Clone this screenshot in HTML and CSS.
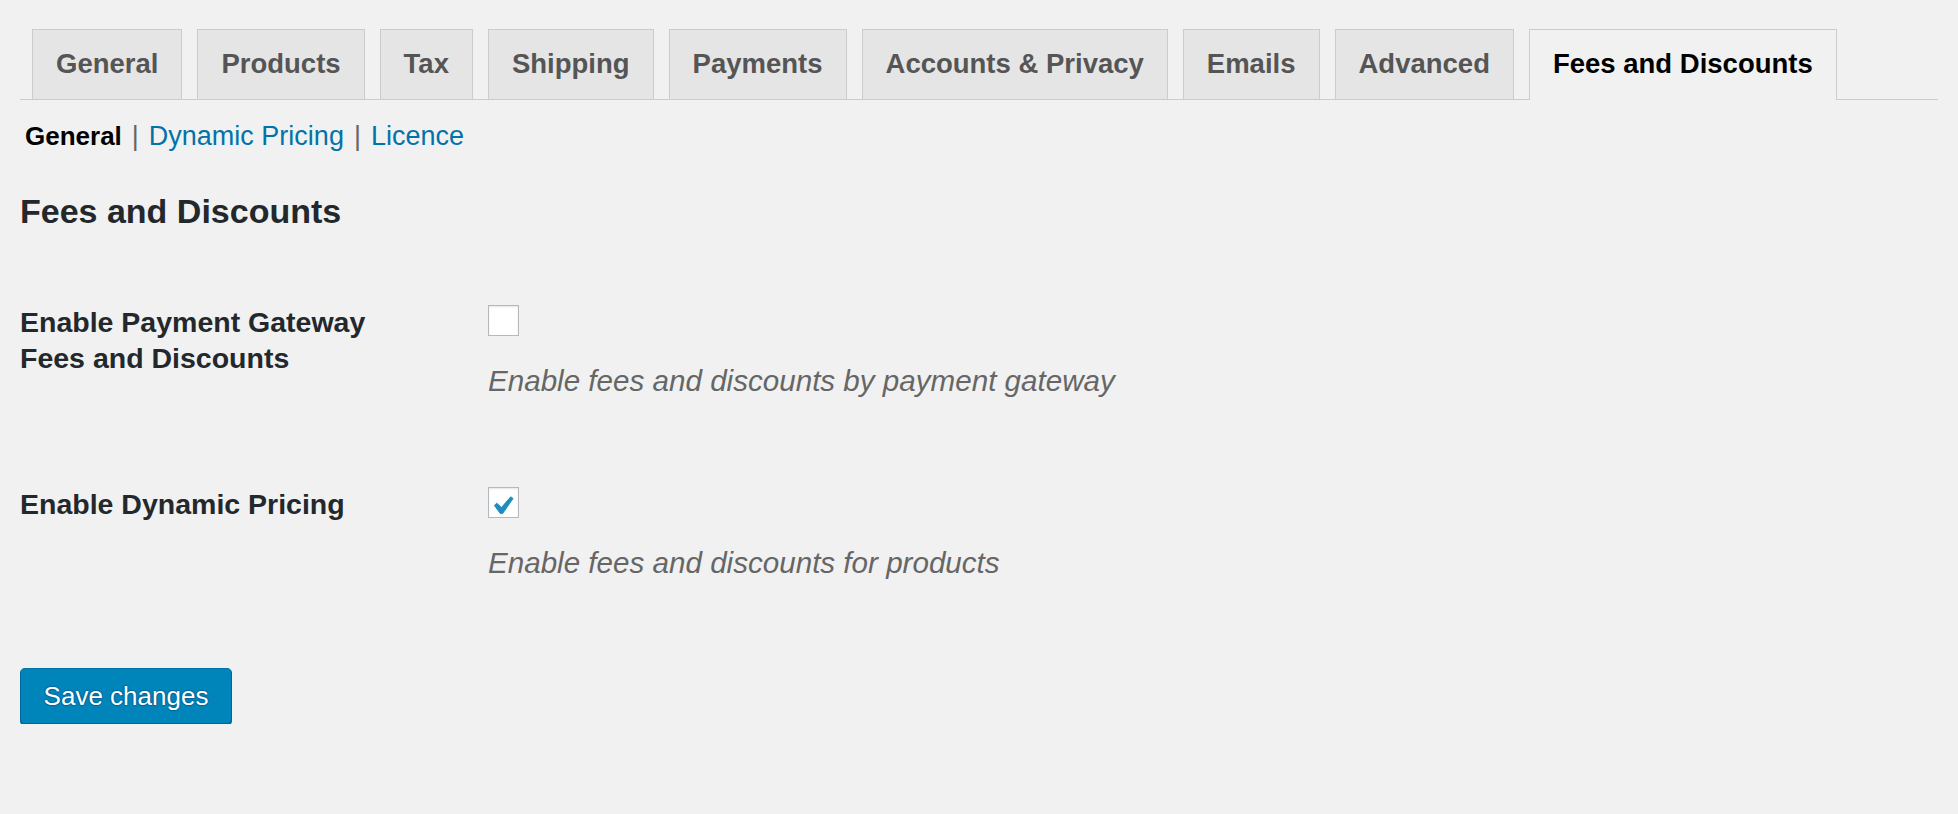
FILE: index.html
```html
<!DOCTYPE html>
<html lang="en">
<head>
    <meta charset="UTF-8">
    <meta name="viewport" content="width=device-width, initial-scale=1.0">
    <title>Fees and Discounts</title>
    <link rel="stylesheet" href="styles.css">
</head>
<body>
<div class="wrap">
    <nav class="nav-tab-wrapper">
        <a class="nav-tab" href="#">General</a>
        <a class="nav-tab" href="#">Products</a>
        <a class="nav-tab" href="#">Tax</a>
        <a class="nav-tab" href="#">Shipping</a>
        <a class="nav-tab" href="#">Payments</a>
        <a class="nav-tab" href="#">Accounts &amp; Privacy</a>
        <a class="nav-tab" href="#">Emails</a>
        <a class="nav-tab" href="#">Advanced</a>
        <a class="nav-tab nav-tab-active" href="#">Fees and Discounts</a>
    </nav>

    <ul class="subsubsub">
        <li><a class="current" href="#">General</a><span class="sep">|</span></li>
        <li><a href="#">Dynamic Pricing</a><span class="sep">|</span></li>
        <li><a href="#">Licence</a></li>
    </ul>

    <h2 class="section-title">Fees and Discounts</h2>

    <form class="form-table">
        <div class="form-row">
            <label class="form-label">Enable Payment Gateway Fees and Discounts</label>
            <div class="form-field">
                <span class="checkbox"></span>
                <p class="description">Enable fees and discounts by payment gateway</p>
            </div>
        </div>
        <div class="form-row">
            <label class="form-label">Enable Dynamic Pricing</label>
            <div class="form-field">
                <span class="checkbox is-checked">
                    <svg viewBox="0 0 20 20" width="36" height="36"><path d="M14.83 4.89l1.34.94-5.81 8.38H9.02L5.78 9.67l1.34-1.25 2.57 2.4z"/></svg>
                </span>
                <p class="description">Enable fees and discounts for products</p>
            </div>
        </div>

        <button type="button" class="button-primary">Save changes</button>
    </form>
</div>
</body>
</html>
```

FILE: styles.css
```css
body {
    margin: 0;
    padding: 0;
    background-color: #f1f1f1;
    color: #23282d;
    font-family: "Liberation Sans", Arial, sans-serif;
}
a {
    text-decoration: none;
}
.wrap {
    padding: 0 20px;
}
.nav-tab-wrapper {
    display: flex;
    gap: 15px;
    padding: 29px 0 0 12px;
    border-bottom: 1px solid #ccc;
}
.nav-tab {
    display: block;
    height: 69px;
    padding: 0 23px;
    border: 1px solid #ccc;
    border-bottom: none;
    background: #e5e5e5;
    color: #555;
    font-size: 27.5px;
    font-weight: bold;
    line-height: 68px;
    white-space: nowrap;
}
.nav-tab-active {
    background: #f1f1f1;
    color: #000;
    height: 70px;
    margin-bottom: -1px;
}
.subsubsub {
    list-style: none;
    display: flex;
    margin: 18px 0 0;
    padding: 0 0 0 5px;
    font-size: 27px;
    line-height: 36px;
    color: #666;
}
.subsubsub a {
    color: #0073aa;
}
.subsubsub a.current {
    color: #000;
    font-weight: bold;
    font-size: 26px;
}
.sep {
    padding: 0 10px;
}
.section-title {
    margin: 37px 0 33px;
    font-size: 34px;
    line-height: 40px;
    font-weight: bold;
    color: #23282d;
}
.form-row {
    display: grid;
    grid-template-columns: 468px 1fr;
    padding: 40px 0 47px;
}
.form-label {
    width: 410px;
    font-size: 28.5px;
    font-weight: bold;
    line-height: 36px;
    color: #23282d;
}
.form-field {
    padding-top: 1px;
}
.checkbox {
    display: flex;
    align-items: center;
    justify-content: center;
    width: 29px;
    height: 29px;
    overflow: visible;
    background: #fff;
    border: 1px solid #b4b9be;
    box-shadow: inset 0 1px 2px rgba(0, 0, 0, 0.1);
}
.checkbox svg {
    flex-shrink: 0;
    fill: #1e8cbe;
    stroke: #1e8cbe;
    stroke-width: 0.5;
    stroke-linejoin: round;
    transform: translate(-2px, 3px);
}
.description {
    margin: 27px 0 0;
    font-size: 29.6px;
    font-style: italic;
    line-height: 36px;
    color: #666;
}
.button-primary {
    display: block;
    margin-top: 40px;
    width: 212px;
    height: 56px;
    padding: 0;
    background: #0085ba;
    border: 1px solid #0073aa;
    border-color: #0073aa #006799 #006799;
    border-radius: 5px;
    box-shadow: 0 2px 0 #006799;
    color: #fff;
    font-family: "Liberation Sans", Arial, sans-serif;
    font-size: 26px;
    text-shadow: 0 -1px 1px #006799, 1px 0 1px #006799, 0 1px 1px #006799, -1px 0 1px #006799;
    cursor: pointer;
}
```
